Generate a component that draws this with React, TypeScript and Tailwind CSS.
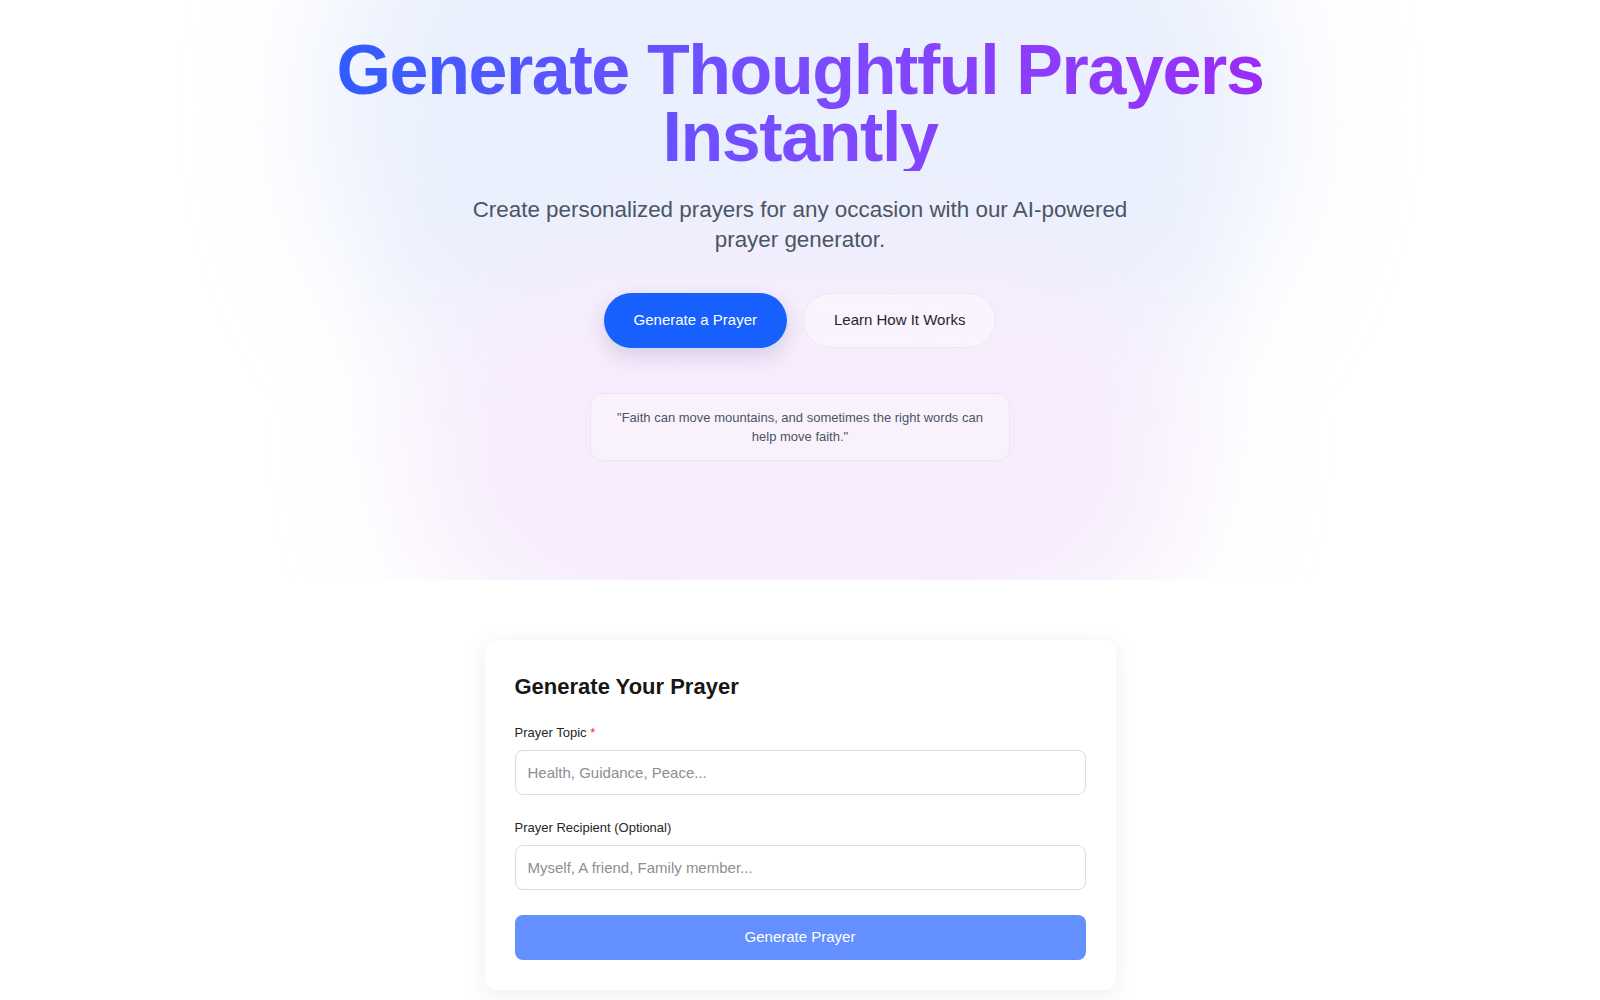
import { useState } from "react";

function Hero() {
  return (
    <section className="relative h-[580px] overflow-hidden bg-white">
      {/* soft background glow */}
      <div className="pointer-events-none absolute left-1/2 top-[-190px] h-[600px] w-[960px] -translate-x-1/2 rounded-full bg-[#eaf0fd] blur-[60px]" />
      <div className="pointer-events-none absolute left-1/2 top-[250px] h-[400px] w-[780px] -translate-x-1/2 rounded-full bg-[#f7ecfd] blur-[60px]" />

      <div className="relative flex flex-col items-center pt-[37px] text-center">
        <h1 className="inline-block bg-gradient-to-r from-[#2f5cff] via-[#7a4bff] to-[#9a2cf7] bg-clip-text text-[70px] font-bold leading-[67px] tracking-[-0.02em] text-transparent">
          Generate Thoughtful Prayers
          <br />
          Instantly
        </h1>
        <p className="mt-6 max-w-[690px] text-[22.4px] leading-[30px] text-[#4b5563]">
          Create personalized prayers for any occasion with our AI-powered prayer generator.
        </p>

        <div className="mt-[38px] flex items-center gap-4">
          <button
            type="button"
            className="h-[55px] rounded-full bg-[#1760fd] px-[30px] text-[15px] text-white shadow-[0_8px_20px_rgba(30,41,90,0.16)]"
          >
            Generate a Prayer
          </button>
          <button
            type="button"
            className="h-[55px] rounded-full border border-[#ebe8f0] bg-white/40 px-[30px] text-[15px] text-[#262626]"
          >
            Learn How It Works
          </button>
        </div>

        <div className="mt-[45px] w-[420px] rounded-xl border border-[#ebe7f0] bg-white/30 px-6 py-[14px] text-[13px] leading-[19px] text-[#4b5563]">
          "Faith can move mountains, and sometimes the right words can help move faith."
        </div>
      </div>
    </section>
  );
}

function PrayerForm() {
  const [topic, setTopic] = useState("");
  const [recipient, setRecipient] = useState("");

  return (
    <div className="w-[631px] rounded-xl bg-white p-[30px] pt-[32px] shadow-[0_4px_24px_rgba(0,0,0,0.07)]">
      <h2 className="text-[22px] font-bold leading-[30px] text-[#171717]">Generate Your Prayer</h2>

      <div className="mt-[21px]">
        <label className="mb-[7px] block text-[13px] leading-[20px] text-[#262626]">
          Prayer Topic <span className="text-red-500">*</span>
        </label>
        <input
          type="text"
          value={topic}
          onChange={(e) => setTopic(e.target.value)}
          placeholder="Health, Guidance, Peace..."
          className="h-[45px] w-full rounded-lg border border-[#dcdcdf] px-3 text-[15px] text-[#262626] placeholder:text-[#8e8e93] focus:outline-none"
        />
      </div>

      <div className="mt-[23px]">
        <label className="mb-[7px] block text-[13px] leading-[20px] text-[#262626]">
          Prayer Recipient (Optional)
        </label>
        <input
          type="text"
          value={recipient}
          onChange={(e) => setRecipient(e.target.value)}
          placeholder="Myself, A friend, Family member..."
          className="h-[45px] w-full rounded-lg border border-[#dcdcdf] px-3 text-[15px] text-[#262626] placeholder:text-[#8e8e93] focus:outline-none"
        />
      </div>

      <button
        type="button"
        disabled={!topic.trim()}
        className="mt-[25px] h-[45px] w-full rounded-lg bg-[#648ffe] text-[15px] text-white"
      >
        Generate Prayer
      </button>
    </div>
  );
}

export default function App() {
  return (
    <div className="min-h-screen bg-white font-['Liberation_Sans',Arial,sans-serif]">
      <Hero />
      <main className="flex justify-center pb-16 pt-[60px]">
        <PrayerForm />
      </main>
    </div>
  );
}
